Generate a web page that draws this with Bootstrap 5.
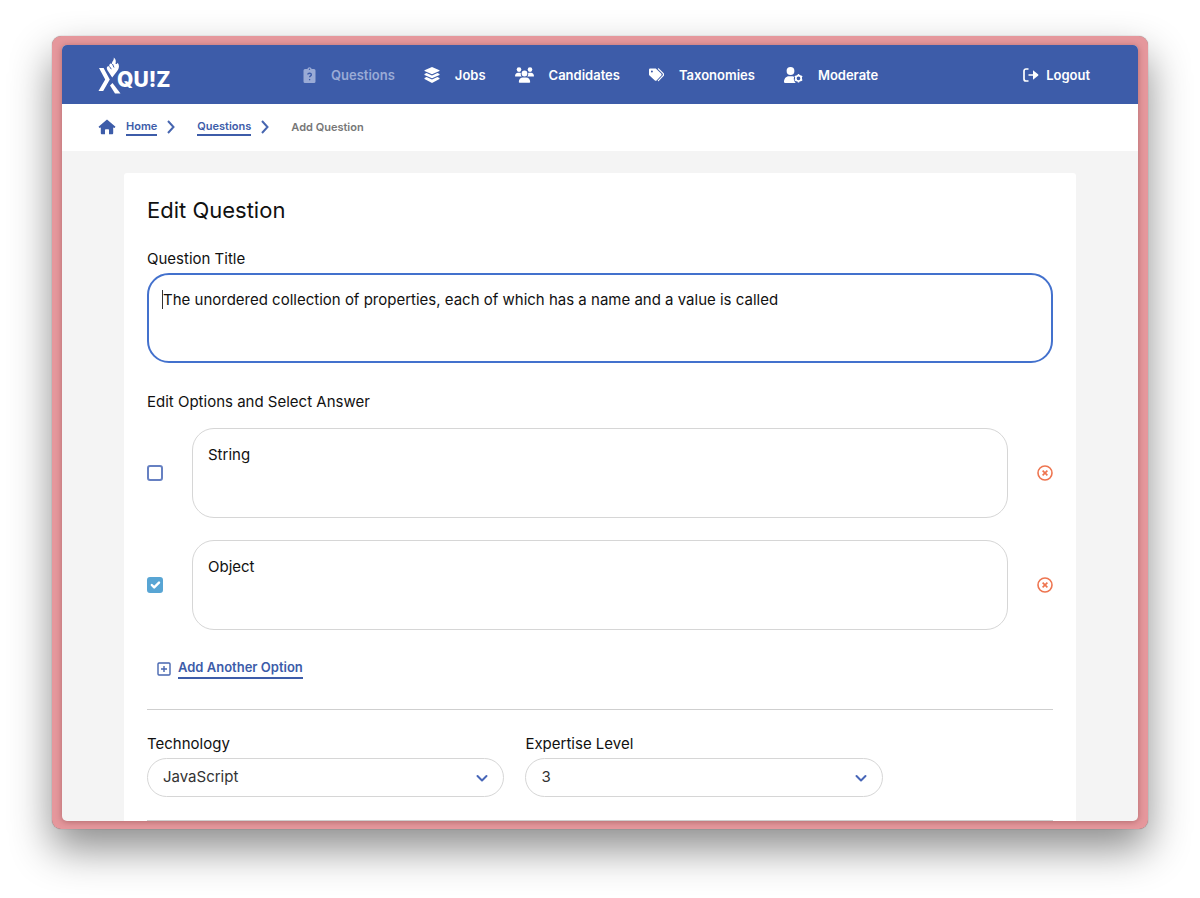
<!DOCTYPE html>
<html lang="en">
<head>
<meta charset="utf-8">
<meta name="viewport" content="width=device-width, initial-scale=1">
<title>XQuiz – Edit Question</title>
<link href="https://cdn.jsdelivr.net/npm/bootstrap@5.3.0/dist/css/bootstrap.min.css" rel="stylesheet">
<style>
  :root { --brand: #3d5ca9; --line: #d6d6d6; }
  body { font-family: Inter, "Liberation Sans", sans-serif; font-size: 15px; line-height: 20px; color: #111; background: #fff; }
  .frame { margin: 36px 52px 69px; padding: 9px 10px 8px; background: #e5979c; border-radius: 9px;
    box-shadow: 0 0 1px rgba(0,0,0,.5), 0 20px 42px rgba(0,0,0,.45); }
  .app-window { background: #f4f4f4; border-radius: 5px; overflow: hidden; box-shadow: 0 1px 6px rgba(60,0,0,.3); }
  .topbar { background: var(--brand); height: 59px; padding: 0 48px 0 36px; }
  .topbar a { color: #fff; font-size: 13px; font-weight: 600; text-decoration: none; }
  .topbar a.current { color: #9aabd6; }
  .topbar svg { fill: currentColor; }
  .main-links { gap: 29px; margin-left: 133px; }
  .main-links a { gap: 15px; }
  .logout-link { gap: 7px; }
  .topbar .brand-link { width: 72px; height: 40px; }
  .brand-link .word { font-size: 21px; font-weight: 800; line-height: 22px; margin: 14px 0 0 -5px; }
  .crumbs { background: #fff; height: 47px; padding: 0 36px 2px; font-size: 11px; line-height: 16px; font-weight: 600; color: #777; }
  .crumbs a, .add-btn span { color: var(--brand); text-decoration: none; border-bottom: 2px solid var(--brand); }
  .crumb { gap: 9px; margin-right: 21px; }
  .home-crumb { gap: 10px; }
  .panel { background: #fff; margin: 22px 62px 0; padding: 24px 23px 0; border-radius: 3px 3px 0 0; }
  .panel h1 { font-size: 22px; line-height: 26px; font-weight: 400; margin-bottom: 26px; }
  .field-label { display: block; margin-bottom: 4px; }
  .panel legend { font-size: 15px; line-height: 20px; margin: 0; padding: 29px 0 16px; }
  .answer { border: 1px solid var(--line); border-radius: 22px; height: 90px; padding: 16px 15px; font-size: 15px; line-height: 20px; color: #111; resize: none; }
  .answer:focus { box-shadow: none; border-color: var(--brand); }
  .answer.active { border: 2px solid #4371cd; padding: 15px 14px; }
  .caret { position: absolute; left: 15px; top: 17px; width: 1px; height: 19px; background: #333; }
  .option-list { gap: 22px; }
  .option-row { gap: 29px; }
  .tick { width: 16px; height: 16px; margin: 0; border: 2px solid #6680c2; flex: none; }
  .form-check-input.tick[type=checkbox] { border-radius: 3px; }
  .tick:checked { background-color: #58a5d4; border-color: #58a5d4; background-size: 16px 16px; background-position: center; }
  .icon-btn { border: 0; padding: 0; background: none; line-height: 0; }
  .add-btn { border: 0; background: none; padding: 0; margin: 28px 0 30px 10px; gap: 7px; color: var(--brand); font-size: 13px; font-weight: 600; line-height: 19px; }
  .rule { height: 1px; margin: 0; border: 0; background: #cfcfcf; opacity: 1; }
  .selectors { display: grid; grid-template-columns: 357fr 357fr 149fr; gap: 21px; padding: 24px 0 23px; }
  .pill { border: 1px solid var(--line); border-radius: 20px; height: 39px; padding: 0 40px 0 15px; font-size: 15px; color: #333;
    background-position: right 14px center; background-size: 14px 14px;
    background-image: url("data:image/svg+xml,%3Csvg xmlns='http://www.w3.org/2000/svg' viewBox='0 0 14 14'%3E%3Cpath d='M2.5 5l4.500 4.500L11.500 5' fill='none' stroke='%234766b8' stroke-width='2' stroke-linecap='round' stroke-linejoin='round'/%3E%3C/svg%3E"); }
</style>
</head>
<body>
<div class="frame">
<div class="app-window">
  <header class="topbar d-flex align-items-center">
    <a href="#" class="brand-link d-flex flex-shrink-0 align-items-start" aria-label="XQuiz">
      <svg class="flex-shrink-0" width="24" height="40" viewBox="0 0 24 40">
        <path d="M1 13h4.600l6.200 11.500L5.200 36H.5l6.700-11.500z"/>
        <path d="M12 30.500l2.500-2.500 8 10.500h-5.500z"/>
        <path d="M14.200 22.500L9.300 15c-1.300-2.500.3-4.500 2-3.300-.4-2.700 1.200-4.200 2.700-2.700-.3-2.700 2.200-3.200 1.800-6.500 2.500 2 2.200 4.300 1.700 6.500 1 .2 1.800-.3 2.200-1.300 2 2.600 1.600 5.600-.5 8.300z"/>
        <path d="M11.500 11.500l1.800 2.700M14.500 9l1.500 3.500" stroke="#3d5ca9" stroke-width="1" fill="none"/>
      </svg>
      <span class="word">QU!Z</span>
    </a>
    <nav class="main-links d-flex" aria-label="Main">
      <a href="#" class="current d-flex align-items-center"><svg width="13" height="16" viewBox="0 0 13 16"><path fill-rule="evenodd" d="M2 2h2.300a2.300 2.300 0 0 1 4.400 0H11a1.500 1.500 0 0 1 1.500 1.500v11A1.500 1.500 0 0 1 11 16H2a1.500 1.500 0 0 1-1.500-1.500v-11A1.500 1.500 0 0 1 2 2zm4.500-.4a.7.7 0 1 0 0 1.400.7.7 0 0 0 0-1.400z"/><path d="M4.700 7.500c.2-1.700 3.700-1.700 3.700.2 0 1.200-1.800 1.200-1.800 2.600M6.600 12v1.200" fill="none" stroke="#3d5ca9" stroke-width="1.300"/></svg>Questions</a>
      <a href="#" class="d-flex align-items-center"><svg width="16" height="16" viewBox="0 0 16 16"><path d="M8 0l7.500 3.200v.8L8 7.300.5 4v-.8zM2.600 6.100L8 8.500l5.400-2.400 2.100 1v.8L8 11.200.5 7.900v-.8zM2.600 10L8 12.400l5.400-2.400 2.100 1v.9L8 16 .5 11.900V11z"/></svg>Jobs</a>
      <a href="#" class="d-flex align-items-center"><svg width="19" height="16" viewBox="0 0 19 16"><circle cx="4" cy="2.600" r="2.300"/><circle cx="15" cy="2.600" r="2.300"/><circle cx="9.500" cy="6.500" r="2.900"/><path d="M0 9.200C0 7 1.300 5.800 3 5.800h1.500c.6 0 1 .1 1.400.4-.3 1.200 0 2.400.8 3.300H.4zM19 9.200c0-2.200-1.300-3.400-3-3.400h-1.500c-.6 0-1 .1-1.400.4.3 1.200 0 2.400-.8 3.300h6.300zM3.800 15.200c0-3 1.700-4.700 4-4.700h3.400c2.300 0 4 1.700 4 4.700l-.7.600h-10z"/></svg>Candidates</a>
      <a href="#" class="d-flex align-items-center"><svg width="15" height="14" viewBox="0 0 15 14"><path fill-rule="evenodd" d="M0 2C0 .9.600.5 1.500.5h4.500c.6 0 .9.100 1.300.5l4.800 4.600c.7.700.7 1.500 0 2.200l-4.300 4.500c-.7.700-1.500.7-2.200 0L.5 7.400C.1 7 0 6.700 0 6.200zm2.900.4a1 1 0 1 0 0 2 1 1 0 0 0 0-2z"/><path d="M9.500.8l4.300 4.400c.9.900.9 1.900.1 2.700l-4.500 4.800" fill="none" stroke="currentColor" stroke-width="1.200" stroke-linecap="round"/></svg>Taxonomies</a>
      <a href="#" class="d-flex align-items-center"><svg width="19" height="16" viewBox="0 0 19 16"><circle cx="6.500" cy="4" r="3.900"/><path d="M0 15.200C0 11.600 2 9.300 5 9.300h3c1.300 0 1.500.2 2.200.6-.9 1.700-.3 4.200 1.500 6H.8z"/><circle cx="14.500" cy="11.300" r="2.700" fill="none" stroke="currentColor" stroke-width="1.700"/><path d="M14.500 7v1.500m0 5.600v1.500m-3.700-6.500l1.300.8m4.800 2.800l1.300.8m0-4.400l-1.300.8m-4.800 2.800l-1.300.8" stroke="currentColor" stroke-width="1.500"/></svg>Moderate</a>
    </nav>
    <a href="#" class="logout-link ms-auto d-flex align-items-center"><svg width="16" height="14" viewBox="0 0 16 14"><path d="M5.500 1H3a2 2 0 0 0-2 2v8a2 2 0 0 0 2 2h2.500M5.500 7h8" fill="none" stroke="currentColor" stroke-width="1.700"/><path d="M10 2.300l5.300 4.200v1L10 11.700z"/></svg>Logout</a>
  </header>

  <nav class="crumbs d-flex align-items-center" aria-label="Breadcrumb">
    <div class="crumb d-flex align-items-center">
      <div class="home-crumb d-flex align-items-center">
        <svg width="18" height="16" viewBox="0 0 18 16" fill="#3d5ca9"><path d="M9 .5l8.500 7.200-1 1.300-1.300-.6V14c0 .8-.5 1.300-1.300 1.300H11v-4c0-.6-.4-1-1-1H8c-.6 0-1 .4-1 1v4H4.100c-.8 0-1.300-.5-1.300-1.300V8.400L1.500 9l-1-1.300z"/></svg>
        <a href="#">Home</a>
      </div>
      <svg width="10" height="14" viewBox="0 0 10 14" fill="none" stroke="#4766b0" stroke-width="2"><path d="M2 1l5.500 6L2 13"/></svg>
    </div>
    <div class="crumb d-flex align-items-center">
      <a href="#">Questions</a>
      <svg width="10" height="14" viewBox="0 0 10 14" fill="none" stroke="#4766b0" stroke-width="2"><path d="M2 1l5.500 6L2 13"/></svg>
    </div>
    <span aria-current="page">Add Question</span>
  </nav>

  <main class="panel">
    <form>
      <h1>Edit Question</h1>
      <label class="field-label" for="qtitle">Question Title</label>
      <div class="position-relative">
        <textarea class="form-control answer active" id="qtitle">The unordered collection of properties, each of which has a name and a value is called</textarea>
        <span class="caret"></span>
      </div>
      <fieldset>
        <legend>Edit Options and Select Answer</legend>
        <div class="option-list d-flex flex-column">
          <div class="option-row d-flex align-items-center">
            <input class="form-check-input tick" type="checkbox" aria-label="String is correct">
            <textarea class="form-control answer" aria-label="Option 1">String</textarea>
            <button type="button" class="icon-btn" aria-label="Remove option 1"><svg width="16" height="16" viewBox="0 0 16 16" fill="none" stroke="#ee7550" stroke-width="1.600"><circle cx="8" cy="8" r="7"/><path d="M5.600 5.600l4.800 4.800m0-4.800l-4.800 4.800"/></svg></button>
          </div>
          <div class="option-row d-flex align-items-center">
            <input class="form-check-input tick" type="checkbox" checked aria-label="Object is correct">
            <textarea class="form-control answer" aria-label="Option 2">Object</textarea>
            <button type="button" class="icon-btn" aria-label="Remove option 2"><svg width="16" height="16" viewBox="0 0 16 16" fill="none" stroke="#ee7550" stroke-width="1.600"><circle cx="8" cy="8" r="7"/><path d="M5.600 5.600l4.800 4.800m0-4.800l-4.800 4.800"/></svg></button>
          </div>
        </div>
      </fieldset>
      <button type="button" class="add-btn d-flex align-items-center">
        <svg width="14" height="14" viewBox="0 0 14 14" fill="none" stroke="#4766b0" stroke-width="1.400"><rect x="1" y="1" width="12" height="12" rx="1"/><path d="M7 4v6M4 7h6"/></svg>
        <span>Add Another Option</span>
      </button>
      <hr class="rule">
      <div class="selectors">
        <div>
          <label class="field-label" for="tech">Technology</label>
          <select class="form-select pill" id="tech"><option>JavaScript</option></select>
        </div>
        <div>
          <label class="field-label" for="level">Expertise Level</label>
          <select class="form-select pill" id="level"><option>3</option></select>
        </div>
      </div>
      <hr class="rule">
    </form>
  </main>
</div>
</div>
<script src="https://cdn.jsdelivr.net/npm/bootstrap@5.3.0/dist/js/bootstrap.bundle.min.js"></script>
</body>
</html>
